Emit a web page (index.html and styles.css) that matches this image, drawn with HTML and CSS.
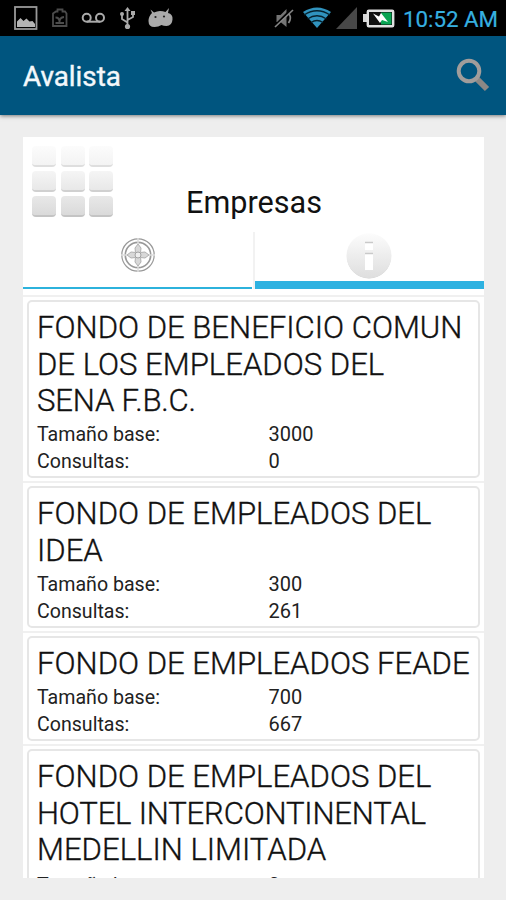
FILE: index.html
```html
<!DOCTYPE html>
<html lang="es">
<head>
<meta charset="utf-8">
<title>Avalista</title>
<link rel="stylesheet" href="styles.css">
</head>
<body>
<div class="screen">
  <header class="status">
    <svg class="status-left" width="180" height="36" viewBox="0 0 180 36">
      <rect x="15" y="7" width="21.500" height="22" fill="none" stroke="#999" stroke-width="1.800"/>
      <path d="M17 27v-5.500l3.500-3.500 3 3 3-2.500 3 3 3-.5 2.500 3v3z" fill="#b5b5b5"/>
      <path d="M56 11.500h1.500v-2h5v2H65l1.500 2V26H53V13.500zM55.500 17.500q4 0 4 4.500 0-4.500 4.500-5M55.500 23h8.500M59.500 21v2" fill="none" stroke="#4c4c4c" stroke-width="1.800"/>
      <g fill="none" stroke="#aaa" stroke-width="2"><circle cx="86.700" cy="17.700" r="4"/><circle cx="100" cy="17.700" r="4"/><path d="M87 21.700h13"/></g>
      <g fill="none" stroke="#aaa" stroke-width="1.800"><path d="M127.500 10v16M127.500 22.500l-5.500-3.500v-4M127.500 20l5.500-3v-4"/></g>
      <path d="M127.500 7l3 4h-6z" fill="#aaa"/><circle cx="127.500" cy="26.500" r="2.600" fill="#aaa"/><circle cx="122" cy="14" r="2" fill="#aaa"/><rect x="131" y="11" width="4" height="4" fill="#aaa"/>
      <path d="M150.500 9.500l3.500 3q3-1.500 6-1.500 3 0 5.500 1l3.500-4-1 5q5 1 4.500 6.500-.5 6.500-6 6.500-3 0-5-1-3 2-7 2-6 0-6-6 0-4.500 3.500-8z" fill="#aaa"/>
      <circle cx="155.500" cy="17" r="1.100" fill="#222"/><circle cx="164" cy="16.500" r="1.100" fill="#222"/>
    </svg>
    <div class="status-right">
      <svg width="125" height="36" viewBox="270 0 125 36">
        <path d="M276.500 15h4l6-6v18l-6-5h-4z" fill="#747474"/><path d="M275 25.500l17-17" stroke="#000" stroke-width="2"/><path d="M275 27l18-17M289 14q3 4-.5 9" stroke="#858585" stroke-width="1.700" fill="none"/>
        <path d="M303 12q14-9 28 0l-14 16z" fill="#3093be"/><path d="M304 15q13-8.500 26 0M307.500 19q9.500-6.500 19 0M311 22.500q6-4 12 0" stroke="#06212d" stroke-width="1.300" fill="none"/>
        <path d="M357 7v22h-21z" fill="#484848"/>
        <rect x="363" y="14" width="4" height="8" fill="#d8d8d8"/><rect x="367.800" y="10.800" width="25.400" height="15.400" rx="1" fill="#111" stroke="#e0e0e0" stroke-width="2.400"/><rect x="381" y="12.500" width="10.500" height="12" fill="#08a452"/><path d="M373 13.500l6 3 2-3.500 7 9-6-2-2 3z" fill="#fff"/>
      </svg>
      <span class="time">10:52 AM</span>
    </div>
  </header>
  <nav class="bar">
    <h1>Avalista</h1>
    <svg width="36" height="36" viewBox="0 0 36 36"><path d="M22 22l10 10" stroke="#8c8885" stroke-width="6"/><circle cx="14" cy="14" r="10.300" fill="none" stroke="#a19d9b" stroke-width="4"/></svg>
  </nav>
  <main class="panel">
    <div class="heading">
      <div class="keys"><i></i><i></i><i></i><i></i><i></i><i></i><i></i><i></i><i></i></div>
      <h2>Empresas</h2>
    </div>
    <div class="tabs">
      <div class="tab">
        <svg width="36" height="36" viewBox="0 0 36 36"><g fill="none" stroke="#999"><circle cx="18" cy="18" r="16.200" stroke-width="1.200"/><circle cx="18" cy="18" r="12.700" stroke-width="1.700"/></g><path d="M18 7l3 4-.5 4.500 4.500-.5 4 3-4 3-4.500-.5.5 4.500-3 4-3-4 .5-4.500-4.500.5-4-3 4-3 4.500.5-.5-4.500z" fill="#d8d8d8" stroke="#b0b0b0"/><circle cx="18" cy="18" r="3" fill="#eee" stroke="#a2a2a2"/><path d="M18 1v6M18 29v6M1 18h6M29 18h6" stroke="#ddd" stroke-width="1.500"/></svg>
      </div>
      <div class="tab active">
        <svg width="46" height="46" viewBox="0 0 46 46"><defs><linearGradient id="disc" x1="0" y1="0" x2="0" y2="1"><stop offset="0" stop-color="#fcfcfc"/><stop offset="1" stop-color="#dedede"/></linearGradient></defs><circle cx="23" cy="23.500" r="22" fill="#d2d2d2"/><circle cx="23" cy="22.700" r="22.500" fill="url(#disc)"/><path d="M19 9h8v8h-8zM19 20h8v17h-8z" fill="#fff"/><path d="M19 9.500h8M19 20.500h8" stroke="#c9c9c9" stroke-width="1.500"/></svg>
      </div>
    </div>
    <div class="list">
      <section class="item"><article class="card"><h3>FONDO DE BENEFICIO COMUN<br>DE LOS EMPLEADOS DEL<br><span class="snug">SENA F.B.C.</span></h3><dl><dt>Tamaño base:</dt><dd>3000</dd><dt>Consultas:</dt><dd>0</dd></dl></article></section>
      <section class="item"><article class="card"><h3>FONDO DE EMPLEADOS DEL<br>IDEA</h3><dl><dt>Tamaño base:</dt><dd>300</dd><dt>Consultas:</dt><dd>261</dd></dl></article></section>
      <section class="item"><article class="card"><h3>FONDO DE EMPLEADOS FEADE</h3><dl><dt>Tamaño base:</dt><dd>700</dd><dt>Consultas:</dt><dd>667</dd></dl></article></section>
      <section class="item"><article class="card"><h3>FONDO DE EMPLEADOS DEL<br><span class="snug">HOTEL INTERCONTINENTAL</span><br>MEDELLIN LIMITADA</h3><dl><dt>Tamaño base:</dt><dd>0</dd></dl></article></section>
    </div>
  </main>
</div>
</body>
</html>
```
FILE: styles.css
```css
* { box-sizing: border-box; margin: 0; padding: 0; }
body { font-family: Roboto, "Liberation Sans", sans-serif; background: #eee; color: #111; }
svg { display: block; flex: none; }
.screen { width: 506px; height: 900px; overflow: hidden; display: flex; flex-direction: column; }
.status { height: 36px; flex: none; background: #000; display: flex; justify-content: space-between; }
.status-right { display: flex; align-items: center; padding-right: 8px; gap: 8px; }
.time { color: #36b0e0; font-size: 22.3px; line-height: 36px; white-space: nowrap; padding-top: 1px; -webkit-text-stroke: .2px #36b0e0; }
.bar { height: 79px; flex: none; background: #00557f; display: flex; align-items: center; justify-content: space-between; padding: 0 15px 2px 23px; box-shadow: 0 1px 4px rgba(0,0,0,.5); }
.bar h1 { color: #f4f8fb; font-size: 27.8px; font-weight: 400; padding-top: 3px; -webkit-text-stroke: .4px #f4f8fb; }
.panel { margin: 22px 22px 0 23px; height: 741px; background: #fff; overflow: hidden; display: flex; flex-direction: column; }
.heading { height: 95px; flex: none; display: flex; align-items: flex-start; padding: 9px 0 0 9px; }
.keys { display: grid; grid-template-columns: repeat(3, 24px); grid-auto-rows: 20.500px; gap: 4.700px; width: 81px; }
.keys i { border-radius: 4px; background: linear-gradient(#fcfcfc, #f3f3f3); border-bottom: 2px solid #dedede; }
.keys i:nth-child(n+4) { background: linear-gradient(#f5f5f5, #e8e8e8); border-color: #d0d0d0; }
.keys i:nth-child(n+7) { background: linear-gradient(#e8e8e8, #dadada); border-color: #c4c4c4; }
.heading h2 { font-size: 30.6px; font-weight: 400; line-height: 37px; margin: 38px 0 0 73px; }
.tabs { height: 57px; flex: none; display: grid; grid-template-columns: 230px 231px; }
.tab { display: flex; justify-content: center; padding-top: 5px; border-bottom: 2px solid #2cb2dc; margin-right: 1px; }
.tab.active { padding: 1px 2px 0 0; border-bottom: 8px solid #2eb2e1; margin: 0 0 0 2px; box-shadow: -2px 0 #f2f2f2; }
.list { padding-top: 6px; }
.item { border-top: 2px solid #f0f0f0; padding: 3px 4px 3px; }
.card { border: 2px solid #e6e6e6; border-radius: 5px; padding: 8px 0 1.4px 8px; }
.card h3 { font-size: 31.1px; font-weight: 300; line-height: 36.6px; white-space: nowrap; -webkit-text-stroke: .35px #111; }
.snug { letter-spacing: -.2px; }
.card dl { display: grid; grid-template-columns: 231.500px 1fr; grid-auto-rows: 26.8px; padding-top: 1.6px; font-size: 20px; line-height: 27px; color: #222; }
.card dt { font-size: 19.6px; }
.item:last-child dl { padding-top: 3px; }
```
